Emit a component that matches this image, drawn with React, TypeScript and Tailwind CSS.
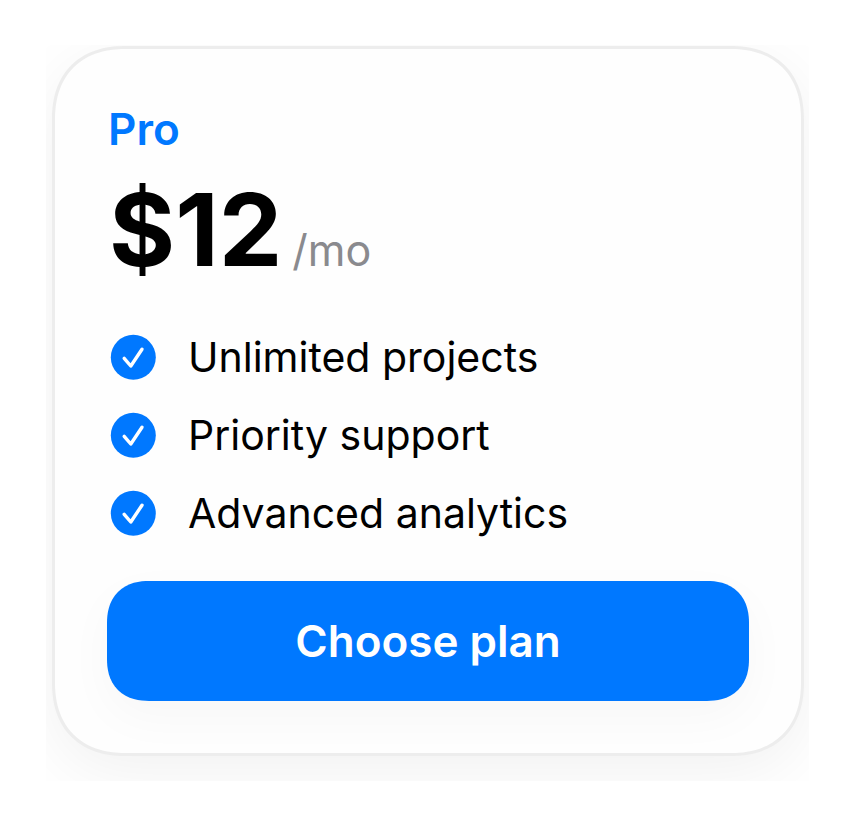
const features = ["Unlimited projects", "Priority support", "Advanced analytics"];

function CheckIcon() {
  return (
    <svg className="size-[46px] shrink-0" viewBox="0 0 46 46" fill="none" aria-hidden="true">
      <circle cx="23.3" cy="23.3" r="22.5" fill="#0078ff" />
      <path
        d="M14.2 24.4 L20.8 32 L32 15.2"
        stroke="white"
        strokeWidth="3.4"
        strokeLinecap="round"
        strokeLinejoin="round"
      />
    </svg>
  );
}

export default function App() {
  return (
    <main className="min-h-screen bg-white px-[46px] py-[45px] font-['Inter','Liberation_Sans',sans-serif] text-black">
      <div className="overflow-hidden pt-px pr-[5px] pb-[25px] pl-[6px]">
        <section className="rounded-[74px] border-3 border-[#ededed] bg-[#fefefe] px-[52px] py-[52px] shadow-[0_16px_64px_rgba(0,0,0,0.06)] [corner-shape:superellipse(1.2)]">
          <h2 className="pl-px text-[44px] leading-[56px] font-semibold text-[#0078ff]">Pro</h2>
          <p className="mt-2 flex items-baseline gap-[10px] pl-[2px]">
            <span className="text-[101px] leading-[128px] font-bold">$12</span>
            <span className="text-[43px] leading-[52px] text-[#8a8a8e]">/mo</span>
          </p>
          <ul className="mt-[38px] flex flex-col gap-[26px]">
            {features.map((feature) => (
              <li key={feature} className="flex items-center gap-8 pl-[3px] text-[41px] leading-[52px]">
                <CheckIcon />
                {feature}
              </li>
            ))}
          </ul>
          <button
            type="button"
            className="mt-[42px] h-[120px] w-full rounded-[42px] bg-[#0078ff] text-[44px] font-semibold text-white shadow-[0_16px_48px_rgba(0,0,0,0.03)] [corner-shape:superellipse(1.2)]"
          >
            Choose plan
          </button>
        </section>
      </div>
    </main>
  );
}
